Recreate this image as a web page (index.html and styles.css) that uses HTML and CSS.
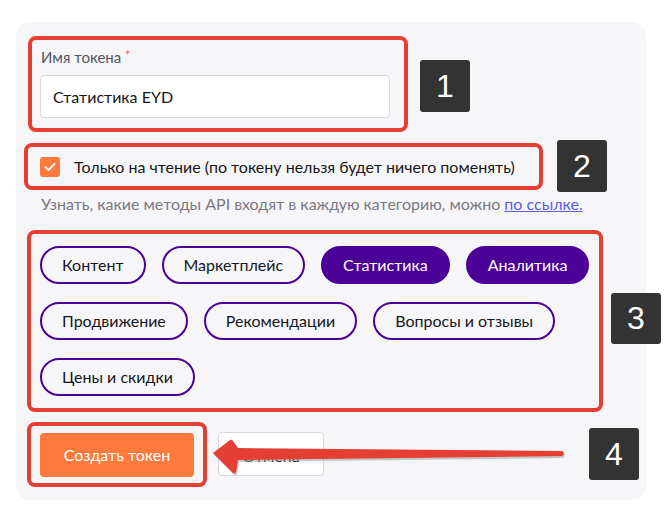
FILE: index.html
```html
<!DOCTYPE html>
<html lang="ru">
<head>
<meta charset="utf-8">
<title>Создание токена</title>
<link rel="stylesheet" href="styles.css">
</head>
<body>
<div class="page">
  <form class="card">
    <div class="mark mark-name">
      <div class="label">Имя токена <span class="req">*</span></div>
      <div class="input">Статистика EYD</div>
    </div>

    <div class="mark mark-read">
      <span class="checkbox">
        <svg width="12" height="10" viewBox="0 0 12 10"><path d="M1.5 5.2 L4.5 8 L10.5 1.8" fill="none" stroke="#fff" stroke-width="1.8" stroke-linecap="round" stroke-linejoin="round"/></svg>
      </span>
      <span class="check-text">Только на чтение (по токену нельзя будет ничего поменять)</span>
    </div>

    <p class="hint">Узнать, какие методы API входят в каждую категорию, можно <a class="link" href="#">по ссылке.</a></p>

    <div class="mark mark-chips">
      <span class="chip">Контент</span>
      <span class="chip">Маркетплейс</span>
      <span class="chip chip-on">Статистика</span>
      <span class="chip chip-on">Аналитика</span>
      <span class="chip">Продвижение</span>
      <span class="chip">Рекомендации</span>
      <span class="chip">Вопросы и отзывы</span>
      <span class="chip">Цены и скидки</span>
    </div>

    <div class="actions">
      <div class="mark mark-submit">
        <span class="btn-primary">Создать токен</span>
      </div>
      <span class="btn-cancel">Отмена</span>
    </div>
  </form>

  <span class="badge badge-1">1</span>
  <span class="badge badge-2">2</span>
  <span class="badge badge-3">3</span>
  <span class="badge badge-4">4</span>

  <svg class="arrow" width="670" height="522" viewBox="0 0 670 522">
    <path d="M214 455 L231 442 Q233 441 234 443 L239 450 L563 453 Q567 455.5 563 458 L239 462 L237 474 Q236 476 234 475 Z" fill="#9a9a9a" opacity="0.55"/>
    <path d="M213 453 L230 440 Q232 439 233 441 L238 448 L562 451 Q566 453.5 562 456 L238 460 L236 472 Q235 474 233 473 Z" fill="#e53e33"/>
  </svg>
</div>
</body>
</html>
```

FILE: styles.css
```css
* { box-sizing: border-box; }

html, body {
  margin: 0;
  padding: 0;
  background: #ffffff;
}

body {
  font-family: Lato, "Noto Sans", sans-serif;
  color: #1f1f24;
}

.page {
  position: relative;
  width: 670px;
  height: 522px;
  padding-top: 22px;
  padding-left: 16px;
}

.card {
  width: 630px;
  height: 478px;
  background: #f6f6f9;
  border-radius: 14px;
  padding: 14px 12px 13px 12px;
  display: flex;
  flex-direction: column;
  align-items: flex-start;
}

.mark {
  border: 4px solid #e53e33;
  border-radius: 8px;
}

/* 1 */
.mark-name {
  width: 380px;
  height: 96px;
  padding: 7px 14px 10px 8px;
}

.label {
  font-size: 15px;
  line-height: 20px;
  color: #55555e;
  margin-left: 1px;
  margin-bottom: 8px;
}

.req {
  color: #f5636b;
  font-size: 13px;
  vertical-align: top;
  line-height: 16px;
}

.input {
  height: 43px;
  background: #ffffff;
  border: 1px solid #d6d6de;
  border-radius: 4px;
  padding-left: 12px;
  font-size: 16px;
  line-height: 41px;
  color: #16161a;
}

/* 2 */
.mark-read {
  margin-top: 11px;
  margin-left: -4px;
  width: 519px;
  height: 47px;
  display: flex;
  align-items: center;
  padding-left: 12px;
}

.checkbox {
  width: 20px;
  height: 20px;
  border-radius: 3px;
  background: #ff7a3c;
  display: flex;
  align-items: center;
  justify-content: center;
  flex: none;
}

.check-text {
  margin-left: 14px;
  font-size: 16px;
  line-height: 20px;
  color: #16161a;
}

.hint {
  margin: 4px 0 0 13px;
  font-size: 16px;
  line-height: 20px;
  color: #7a7983;
  white-space: nowrap;
}

.link {
  color: #5a5ce6;
  text-decoration: underline;
}

/* 3 */
.mark-chips {
  margin-top: 16px;
  margin-left: -1px;
  width: 576px;
  height: 182px;
  padding: 12px 8px 12px 9px;
  display: flex;
  flex-wrap: wrap;
  align-content: flex-start;
  column-gap: 16px;
  row-gap: 18px;
}

.chip {
  height: 38px;
  border: 2px solid #4b0097;
  border-radius: 19px;
  padding: 0 20px;
  font-size: 16px;
  line-height: 34px;
  color: #16161a;
  white-space: nowrap;
}

.chip-on {
  background: #4b0097;
  color: #ffffff;
}

/* 4 */
.actions {
  margin-top: 10px;
  margin-left: -1px;
  display: flex;
  align-items: center;
  column-gap: 11px;
}

.mark-submit {
  width: 180px;
  height: 65px;
  padding: 7px 9px 6px 9px;
}

.btn-primary {
  display: block;
  height: 44px;
  background: #ff7a3c;
  border-radius: 4px;
  color: #ffffff;
  font-size: 16px;
  line-height: 44px;
  text-align: center;
}

.btn-cancel {
  width: 106px;
  height: 44px;
  margin-top: -1px;
  background: #ffffff;
  border: 1px solid #d6d6de;
  border-radius: 4px;
  font-size: 16px;
  line-height: 46px;
  text-align: center;
  color: #16161a;
}

/* annotation badges */
.badge {
  position: absolute;
  width: 50px;
  height: 52px;
  background: #333333;
  border-radius: 3px;
  color: #ffffff;
  font-family: "Liberation Sans", Arial, sans-serif;
  font-size: 32px;
  line-height: 52px;
  text-align: center;
}

.badge-1 { left: 420px; top: 60px; }
.badge-2 { left: 557px; top: 140px; }
.badge-3 { left: 611px; top: 293px; height: 51px; line-height: 51px; }
.badge-4 { left: 589px; top: 428px; }

.arrow {
  position: absolute;
  left: 0;
  top: 0;
  pointer-events: none;
}
```
